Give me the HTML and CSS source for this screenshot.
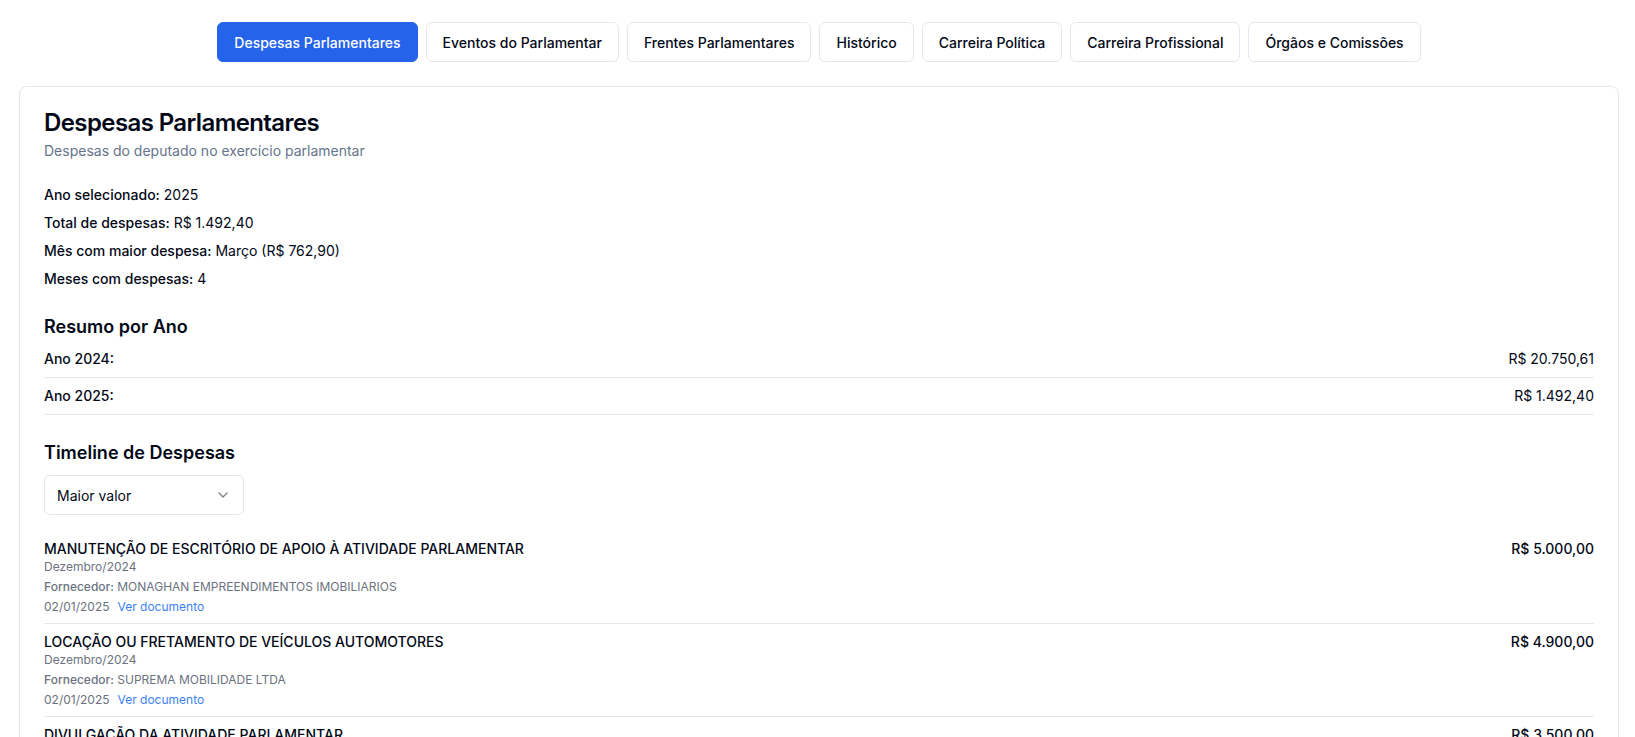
FILE: index.html
```html
<!DOCTYPE html>
<html lang="pt-BR">
<head>
    <meta charset="UTF-8">
    <meta name="viewport" content="width=device-width, initial-scale=1.0">
    <title>Despesas Parlamentares</title>
    <link rel="stylesheet" href="styles.css">
</head>
<body>
    <div class="page">
        <nav class="tabs">
            <button class="tab active">Despesas Parlamentares</button>
            <button class="tab">Eventos do Parlamentar</button>
            <button class="tab">Frentes Parlamentares</button>
            <button class="tab">Histórico</button>
            <button class="tab">Carreira Política</button>
            <button class="tab">Carreira Profissional</button>
            <button class="tab">Órgãos e Comissões</button>
        </nav>

        <div class="card">
            <div class="card-header">
                <h1 class="card-title">Despesas Parlamentares</h1>
                <p class="card-description">Despesas do deputado no exercício parlamentar</p>
            </div>

            <div class="card-content">
                <div class="stats">
                    <p><span class="stat-label">Ano selecionado:</span> 2025</p>
                    <p><span class="stat-label">Total de despesas:</span> R$ 1.492,40</p>
                    <p><span class="stat-label">Mês com maior despesa:</span> Março (R$ 762,90)</p>
                    <p><span class="stat-label">Meses com despesas:</span> 4</p>
                </div>

                <h2 class="section-title">Resumo por Ano</h2>
                <div class="year-list">
                    <div class="year-row">
                        <span class="year-label">Ano 2024:</span>
                        <span>R$ 20.750,61</span>
                    </div>
                    <div class="year-row">
                        <span class="year-label">Ano 2025:</span>
                        <span>R$ 1.492,40</span>
                    </div>
                </div>

                <h2 class="section-title">Timeline de Despesas</h2>
                <button class="select">
                    <span>Maior valor</span>
                    <svg class="chevron" viewBox="0 0 24 24" fill="none" stroke="currentColor" stroke-width="2" stroke-linecap="round" stroke-linejoin="round"><path d="m6 9 6 6 6-6"/></svg>
                </button>

                <ul class="expenses">
                    <li class="expense">
                        <div class="expense-info">
                            <div class="expense-type">MANUTENÇÃO DE ESCRITÓRIO DE APOIO À ATIVIDADE PARLAMENTAR</div>
                            <div class="expense-meta">Dezembro/2024</div>
                            <div class="expense-meta spaced"><span class="meta-label">Fornecedor:</span> MONAGHAN EMPREENDIMENTOS IMOBILIARIOS</div>
                            <div class="expense-meta spaced">02/01/2025<a class="doc-link" href="#">Ver documento</a></div>
                        </div>
                        <div class="expense-value">R$ 5.000,00</div>
                    </li>
                    <li class="expense">
                        <div class="expense-info">
                            <div class="expense-type">LOCAÇÃO OU FRETAMENTO DE VEÍCULOS AUTOMOTORES</div>
                            <div class="expense-meta">Dezembro/2024</div>
                            <div class="expense-meta spaced"><span class="meta-label">Fornecedor:</span> SUPREMA MOBILIDADE LTDA</div>
                            <div class="expense-meta spaced">02/01/2025<a class="doc-link" href="#">Ver documento</a></div>
                        </div>
                        <div class="expense-value">R$ 4.900,00</div>
                    </li>
                    <li class="expense">
                        <div class="expense-info">
                            <div class="expense-type">DIVULGAÇÃO DA ATIVIDADE PARLAMENTAR</div>
                            <div class="expense-meta">Dezembro/2024</div>
                            <div class="expense-meta spaced"><span class="meta-label">Fornecedor:</span> AGÊNCIA DE COMUNICAÇÃO LTDA</div>
                            <div class="expense-meta spaced">05/01/2025<a class="doc-link" href="#">Ver documento</a></div>
                        </div>
                        <div class="expense-value">R$ 3.500,00</div>
                    </li>
                </ul>
            </div>
        </div>
    </div>
</body>
</html>
```

FILE: styles.css
```css
* {
    box-sizing: border-box;
}

body {
    margin: 0;
    padding: 22px 0 0 3px;
    font-family: 'Inter', 'Noto Sans', sans-serif;
    font-size: 14px;
    line-height: 20px;
    color: #020817;
    background-color: #ffffff;
}

.page {
    max-width: 1600px;
    margin: 0 auto;
}

.tabs {
    display: flex;
    justify-content: center;
    gap: 8px;
    margin-bottom: 24px;
}

.tab {
    height: 40px;
    padding: 0 16px;
    font-family: inherit;
    font-size: 14px;
    font-weight: 500;
    color: #020817;
    background-color: #ffffff;
    border: 1px solid #e2e8f0;
    border-radius: 6px;
    cursor: pointer;
}

.tab.active {
    background-color: #2563eb;
    border-color: #2563eb;
    color: #ffffff;
}

.card {
    border: 1px solid #e2e8f0;
    border-radius: 8px;
    background-color: #ffffff;
    box-shadow: 0 1px 2px rgba(0, 0, 0, 0.05);
}

.card-header {
    padding: 24px;
    display: flex;
    flex-direction: column;
    gap: 6px;
}

.card-title {
    margin: 0;
    font-size: 24px;
    line-height: 24px;
    font-weight: 600;
    letter-spacing: -0.025em;
}

.card-description {
    margin: 0;
    color: #64748b;
}

.card-content {
    padding: 0 24px 24px;
}

.stats p {
    margin: 0 0 8px;
}

.stats p:last-child {
    margin-bottom: 0;
}

.stat-label {
    font-weight: 500;
}

.section-title {
    margin: 24px 0 0;
    font-size: 18px;
    line-height: 28px;
    font-weight: 600;
}

.year-row {
    display: flex;
    justify-content: space-between;
    padding: 8px 0;
    border-bottom: 1px solid #e2e8f0;
}

.year-label {
    font-weight: 500;
}

.select {
    margin-top: 8px;
    width: 200px;
    height: 40px;
    padding: 0 12px;
    display: flex;
    align-items: center;
    justify-content: space-between;
    font-family: inherit;
    font-size: 14px;
    color: #020817;
    background-color: #ffffff;
    border: 1px solid #e2e8f0;
    border-radius: 6px;
}

.chevron {
    width: 16px;
    height: 16px;
    opacity: 0.5;
}

.expenses {
    list-style: none;
    margin: 16px 0 0;
    padding: 0;
}

.expense {
    display: flex;
    justify-content: space-between;
    padding: 8px 0;
    border-bottom: 1px solid #e2e8f0;
}

.expense-type {
    font-weight: 500;
}

.expense-value {
    font-weight: 500;
}

.expense-meta {
    font-size: 12px;
    line-height: 16px;
    color: #6b7280;
}

.expense-meta.spaced {
    margin-top: 4px;
}

.meta-label {
    font-weight: 500;
}

.doc-link {
    margin-left: 8px;
    color: #3b82f6;
    text-decoration: none;
}
```
